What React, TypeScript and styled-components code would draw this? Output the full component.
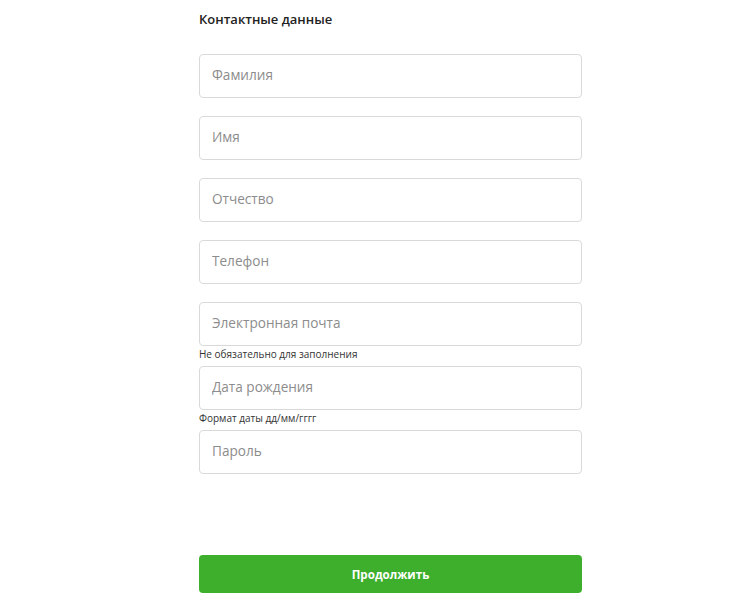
import React from "react";
import styled, { createGlobalStyle } from "styled-components";

const Global = createGlobalStyle`
  html, body { margin: 0; padding: 0; background: #fff; }
  body { font-family: "Open Sans", "Noto Sans", sans-serif; }
  * { box-sizing: border-box; }
`;

const Page = styled.div`
  width: 752px;
  min-height: 607px;
  padding: 9px 0 0 199px;
`;

const Form = styled.form`
  width: 383px;
  display: flex;
  flex-direction: column;
`;

const Title = styled.h2`
  margin: 0 0 25px;
  font-size: 13px;
  line-height: 20px;
  font-weight: 600;
  color: #222;
`;

const Field = styled.div<{ $gap: number }>`
  display: flex;
  flex-direction: column;
  margin-bottom: ${(p) => p.$gap}px;
`;

const Input = styled.input`
  width: 100%;
  height: 44px;
  border: 1px solid #d9d9d9;
  border-radius: 4px;
  padding: 0 12px 3px;
  font-family: inherit;
  font-size: 13.6px;
  color: #333;
  outline: none;
  background: #fff;
  &::placeholder {
    color: #8c8c8c;
  }
`;

const Hint = styled.div`
  font-size: 10px;
  line-height: 16px;
  color: #333;
  padding-bottom: 4px;
`;

const Button = styled.button`
  margin-top: 81px;
  width: 100%;
  height: 38px;
  border: none;
  border-radius: 4px;
  background: #3daf2c;
  color: #fff;
  font-family: inherit;
  font-size: 11.6px;
  font-weight: 700;
  cursor: pointer;
`;

const fields: { ph: string; hint?: string; type?: string }[] = [
  { ph: "Фамилия" },
  { ph: "Имя" },
  { ph: "Отчество" },
  { ph: "Телефон" },
  { ph: "Электронная почта", hint: "Не обязательно для заполнения" },
  { ph: "Дата рождения", hint: "Формат даты дд/мм/гггг" },
  { ph: "Пароль", type: "password" },
];

export default function App() {
  return (
    <>
      <Global />
      <Page>
        <Form onSubmit={(e) => e.preventDefault()}>
          <Title>Контактные данные</Title>
          {fields.map((f, i) => (
            <Field key={f.ph} $gap={f.hint || i === fields.length - 1 ? 0 : 18}>
              <Input placeholder={f.ph} type={f.type ?? "text"} />
              {f.hint && <Hint>{f.hint}</Hint>}
            </Field>
          ))}
          <Button type="submit">Продолжить</Button>
        </Form>
      </Page>
    </>
  );
}
